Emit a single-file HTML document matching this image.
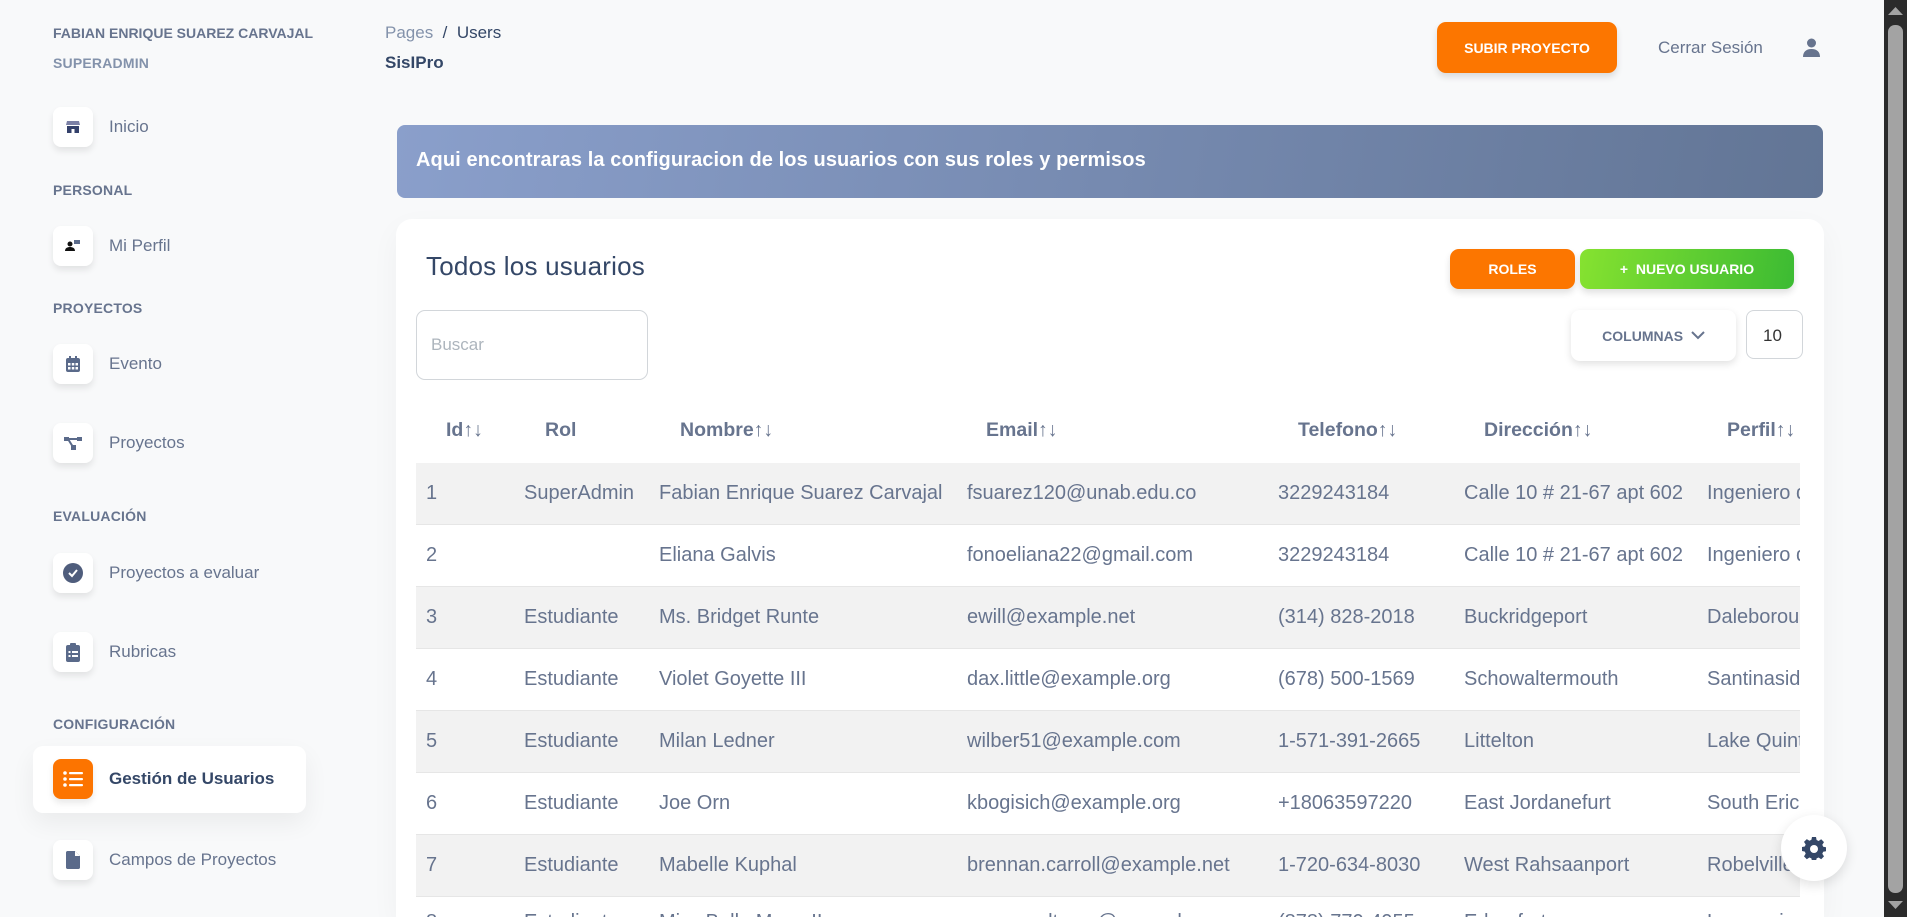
<!DOCTYPE html>
<html style="width:1907px;height:917px;overflow:hidden"><head><meta charset="utf-8"><style>
*{margin:0;padding:0;box-sizing:border-box}
body{width:1907px;height:917px;overflow:hidden;background:#f8f9fa;font-family:"Liberation Sans",sans-serif;position:relative;color:#67748e}
.a{position:absolute}
.lbl{position:absolute;left:53px;font-size:14px;font-weight:bold;color:#67748e;letter-spacing:.2px}
.it{position:absolute;left:53px;height:40px;display:flex;align-items:center}
.ib{width:40px;height:40px;border-radius:8px;background:#fff;box-shadow:0 4px 7px rgba(0,0,0,.09);display:flex;align-items:center;justify-content:center}
.it span{margin-left:16px;font-size:17px;color:#67748e}
.btn{position:absolute;border-radius:9px;color:#fff;font-weight:bold;font-size:14px;display:flex;align-items:center;justify-content:center;box-shadow:0 4px 7px rgba(0,0,0,.12)}
.th{position:absolute;top:419px;font-size:19.5px;font-weight:bold;color:#67748e}
.row{position:absolute;left:416px;width:1384px;height:62px;border-bottom:1px solid #e6e6e6;font-size:20px;color:#67748e}
.row.g{background:#f2f2f2}
.row div{position:absolute;top:19px;white-space:nowrap}
</style></head><body>

<div class="lbl" style="top:25px;font-size:14px;letter-spacing:0">FABIAN ENRIQUE SUAREZ CARVAJAL</div>
<div class="lbl" style="top:55px;color:#8392ab">SUPERADMIN</div>

<div class="it" style="top:107px"><div class="ib"><svg width="16" height="14" viewBox="0 0 16 14"><path d="M2 1h12l1 4H1z" fill="#7b80a6"/><path d="M2 6h12v7H9.5V9h-3v4H2z" fill="#34416b"/></svg></div><span>Inicio</span></div>
<div class="lbl" style="top:182px">PERSONAL</div>
<div class="it" style="top:226px"><div class="ib"><svg width="16" height="14" viewBox="0 0 16 14"><circle cx="5" cy="5" r="2.5" fill="#111"/><path d="M0 12c0-3 2.5-4 5-4s5 1 5 4z" fill="#111"/><rect x="9" y="1" width="6" height="4" fill="#5a6a8a"/></svg></div><span>Mi Perfil</span></div>
<div class="lbl" style="top:300px">PROYECTOS</div>
<div class="it" style="top:344px"><div class="ib"><svg width="18" height="18" viewBox="0 0 18 18"><rect x="2" y="3" width="14" height="14" rx="2" fill="#5a6a8a"/><rect x="5" y="1" width="2" height="4" fill="#5a6a8a"/><rect x="11" y="1" width="2" height="4" fill="#5a6a8a"/><g fill="#fff"><rect x="4" y="8" width="2.5" height="2.5"/><rect x="7.8" y="8" width="2.5" height="2.5"/><rect x="11.5" y="8" width="2.5" height="2.5"/><rect x="4" y="12" width="2.5" height="2.5"/><rect x="7.8" y="12" width="2.5" height="2.5"/><rect x="11.5" y="12" width="2.5" height="2.5"/></g></svg></div><span>Evento</span></div>
<div class="it" style="top:423px"><div class="ib"><svg width="20" height="16" viewBox="0 0 20 16"><rect x="1" y="2" width="5" height="4" fill="#5a6a8a"/><rect x="14" y="2" width="5" height="4" fill="#5a6a8a"/><rect x="8" y="10" width="5" height="5" fill="#5a6a8a"/><path d="M5 4h10M5 4l5 8" stroke="#5a6a8a" stroke-width="2"/></svg></div><span>Proyectos</span></div>
<div class="lbl" style="top:508px">EVALUACIÓN</div>
<div class="it" style="top:553px"><div class="ib"><svg width="20" height="20" viewBox="0 0 20 20"><circle cx="10" cy="10" r="10" fill="#4f5d7c"/><path d="M6 10l3 3 5-6" stroke="#fff" stroke-width="2" fill="none"/></svg></div><span>Proyectos a evaluar</span></div>
<div class="it" style="top:632px"><div class="ib"><svg width="16" height="20" viewBox="0 0 16 20"><rect x="1" y="3" width="14" height="17" rx="2" fill="#5a6a8a"/><rect x="5" y="1" width="6" height="4" rx="1" fill="#5a6a8a"/><g fill="#fff"><rect x="3.5" y="9" width="2" height="2"/><rect x="7" y="9" width="6" height="2"/><rect x="3.5" y="13" width="2" height="2"/><rect x="7" y="13" width="6" height="2"/></g></svg></div><span>Rubricas</span></div>
<div class="lbl" style="top:716px">CONFIGURACIÓN</div>
<div class="a" style="left:33px;top:746px;width:273px;height:67px;background:#fff;border-radius:10px;box-shadow:0 10px 25px rgba(0,0,0,.06)"></div>
<div class="it" style="top:759px"><div class="ib" style="background:#fc7400"><svg width="20" height="16" viewBox="0 0 20 16"><g fill="#fff"><circle cx="2" cy="2" r="1.8"/><circle cx="2" cy="8" r="1.8"/><circle cx="2" cy="14" r="1.8"/><rect x="6" y="1" width="14" height="2.2" rx="1"/><rect x="6" y="7" width="14" height="2.2" rx="1"/><rect x="6" y="13" width="14" height="2.2" rx="1"/></g></svg></div><span style="color:#344767;font-weight:bold">Gestión de Usuarios</span></div>
<div class="it" style="top:840px"><div class="ib"><svg width="14" height="18" viewBox="0 0 14 18"><path d="M0 1.5C0 .7.7 0 1.5 0H9l5 5v11.5c0 .8-.7 1.5-1.5 1.5h-11C.7 18 0 17.3 0 16.5z" fill="#5a6a8a"/><path d="M9 0v5h5" fill="#fff"/></svg></div><span>Campos de Proyectos</span></div>

<div class="a" style="left:385px;top:23px;font-size:17px;color:#8392ab">Pages &nbsp;<span style="color:#344767">/ &nbsp;Users</span></div>
<div class="a" style="left:385px;top:53px;font-size:17px;font-weight:bold;color:#344767">SisIPro</div>
<div class="btn" style="left:1437px;top:22px;width:180px;height:51px;background:#fc7600">SUBIR PROYECTO</div>
<div class="a" style="left:1658px;top:38px;font-size:17px;color:#67748e">Cerrar Sesión</div>
<svg class="a" style="left:1803px;top:38px" width="17" height="19" viewBox="0 0 17 19"><circle cx="8.5" cy="5" r="4.5" fill="#67748e"/><path d="M0 19c0-5 3-8 8.5-8s8.5 3 8.5 8z" fill="#67748e"/></svg>

<div class="a" style="left:397px;top:125px;width:1426px;height:73px;border-radius:8px;background:linear-gradient(100deg,#8a9fcb,#627595)"></div>
<div class="a" style="left:416px;top:149px;font-size:20px;font-weight:bold;color:#fff;letter-spacing:.1px">Aqui encontraras la configuracion de los usuarios con sus roles y permisos</div>

<div class="a" style="left:396px;top:219px;width:1428px;height:698px;background:#fff;border-radius:16px 16px 0 0;box-shadow:0 10px 30px rgba(0,0,0,.04)"></div>
<div class="a" style="left:426px;top:251px;font-size:26px;color:#344767;letter-spacing:.2px">Todos los usuarios</div>
<div class="btn" style="left:1450px;top:249px;width:125px;height:40px;background:#fc7600">ROLES</div>
<div class="btn" style="left:1580px;top:249px;width:214px;height:40px;background:linear-gradient(100deg,#86e230,#3cbb33)">+&nbsp; NUEVO USUARIO</div>
<div class="a" style="left:416px;top:310px;width:232px;height:70px;border:1px solid #d2d6da;border-radius:9px"></div>
<div class="a" style="left:431px;top:335px;font-size:17px;color:#adb5bd">Buscar</div>
<div class="a" style="left:1571px;top:310px;width:165px;height:51px;background:#fff;border-radius:9px;box-shadow:0 3px 8px rgba(0,0,0,.12);display:flex;align-items:center;justify-content:center;font-size:14px;font-weight:bold;color:#67748e">COLUMNAS&nbsp;&nbsp;<svg width="14" height="9" viewBox="0 0 14 9"><path d="M1 1l6 6 6-6" stroke="#67748e" stroke-width="2" fill="none"/></svg></div>
<div class="a" style="left:1746px;top:310px;width:57px;height:49px;border:1px solid #d2d6da;border-radius:8px;font-size:17px;color:#333;padding:15px 0 0 16px">10</div>

<div class="th" style="left:446px">Id↑↓</div>
<div class="th" style="left:545px">Rol</div>
<div class="th" style="left:680px">Nombre↑↓</div>
<div class="th" style="left:986px">Email↑↓</div>
<div class="th" style="left:1298px">Telefono↑↓</div>
<div class="th" style="left:1484px">Dirección↑↓</div>
<div class="th" style="left:1727px">Perfil↑↓</div>

<div class="a" style="left:416px;top:463px;width:1384px;height:454px;overflow:hidden">
<div class="row g" style="top:0;left:0"><div style="left:10px">1</div><div style="left:108px">SuperAdmin</div><div style="left:243px">Fabian Enrique Suarez Carvajal</div><div style="left:551px">fsuarez120@unab.edu.co</div><div style="left:862px">3229243184</div><div style="left:1048px">Calle 10 # 21-67 apt 602</div><div style="left:1291px">Ingeniero de</div></div>
<div class="row" style="top:62px;left:0"><div style="left:10px">2</div><div style="left:243px">Eliana Galvis</div><div style="left:551px">fonoeliana22@gmail.com</div><div style="left:862px">3229243184</div><div style="left:1048px">Calle 10 # 21-67 apt 602</div><div style="left:1291px">Ingeniero de</div></div>
<div class="row g" style="top:124px;left:0"><div style="left:10px">3</div><div style="left:108px">Estudiante</div><div style="left:243px">Ms. Bridget Runte</div><div style="left:551px">ewill@example.net</div><div style="left:862px">(314) 828-2018</div><div style="left:1048px">Buckridgeport</div><div style="left:1291px">Daleborough</div></div>
<div class="row" style="top:186px;left:0"><div style="left:10px">4</div><div style="left:108px">Estudiante</div><div style="left:243px">Violet Goyette III</div><div style="left:551px">dax.little@example.org</div><div style="left:862px">(678) 500-1569</div><div style="left:1048px">Schowaltermouth</div><div style="left:1291px">Santinaside</div></div>
<div class="row g" style="top:248px;left:0"><div style="left:10px">5</div><div style="left:108px">Estudiante</div><div style="left:243px">Milan Ledner</div><div style="left:551px">wilber51@example.com</div><div style="left:862px">1-571-391-2665</div><div style="left:1048px">Littelton</div><div style="left:1291px">Lake Quinton</div></div>
<div class="row" style="top:310px;left:0"><div style="left:10px">6</div><div style="left:108px">Estudiante</div><div style="left:243px">Joe Orn</div><div style="left:551px">kbogisich@example.org</div><div style="left:862px">+18063597220</div><div style="left:1048px">East Jordanefurt</div><div style="left:1291px">South Erica</div></div>
<div class="row g" style="top:372px;left:0"><div style="left:10px">7</div><div style="left:108px">Estudiante</div><div style="left:243px">Mabelle Kuphal</div><div style="left:551px">brennan.carroll@example.net</div><div style="left:862px">1-720-634-8030</div><div style="left:1048px">West Rahsaanport</div><div style="left:1291px">Robelville</div></div>
<div class="row" style="top:434px;left:0;border:0"><div style="left:10px;top:14px">8</div><div style="left:108px;top:14px">Estudiante</div><div style="left:243px;top:14px">Miss Bella Mann II</div><div style="left:551px;top:14px">marquardt.ona@example.com</div><div style="left:862px;top:14px">(878) 770-4955</div><div style="left:1048px;top:14px">Edgarfort</div><div style="left:1291px;top:14px">Lorenaview</div></div>
</div>

<div class="a" style="left:1781px;top:815px;width:66px;height:66px;border-radius:50%;background:#fff;box-shadow:0 4px 12px rgba(0,0,0,.12);display:flex;align-items:center;justify-content:center">
<svg width="24" height="24" viewBox="0 0 24 24"><path fill="#344767" d="M10 1h4l.6 3 2 1 2.6-1.7 2.8 2.8L20.3 8.7l.9 2 2.8.5v4l-2.8.6-.9 2 1.7 2.6-2.8 2.8-2.6-1.7-2 .9-.6 2.8h-4l-.6-2.8-2-.9-2.6 1.7-2.8-2.8L3.7 17.6l-.9-2L0 15v-4l2.8-.5.9-2L2 5.9 4.8 3.1l2.6 1.7 2-1z"/><circle cx="12" cy="13" r="4" fill="#fff"/></svg></div>

<div class="a" style="left:1884px;top:0;width:23px;height:917px;background:#2b2b2b"></div>
<div class="a" style="left:1888px;top:25px;width:15px;height:868px;background:#a3a3a3;border-radius:7px"></div>
<svg class="a" style="left:1887px;top:6px" width="17" height="10"><path d="M1 9L8.5 1 16 9z" fill="#a3a3a3"/></svg>
<svg class="a" style="left:1887px;top:900px" width="17" height="10"><path d="M1 1L8.5 9 16 1z" fill="#a3a3a3"/></svg>
</body></html>
